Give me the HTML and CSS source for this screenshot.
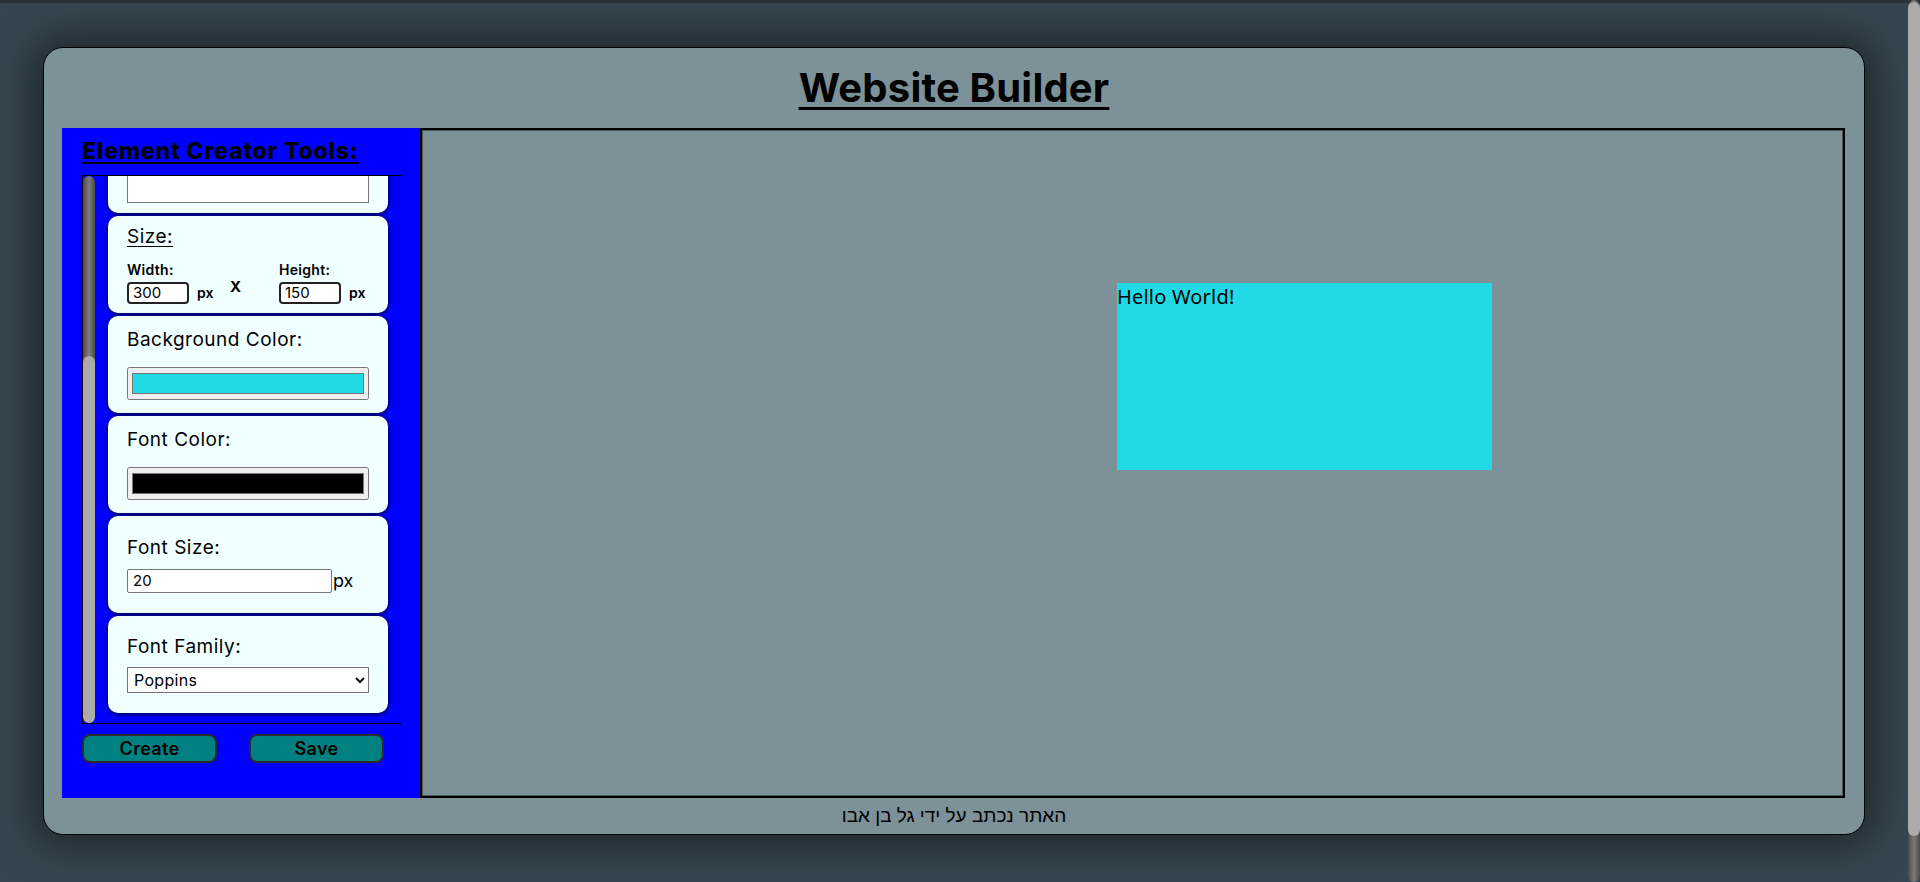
FILE: index.html
```html
<!DOCTYPE html>
<html lang="he">
<head>
<meta charset="utf-8">
<title>Website Builder</title>
<link rel="stylesheet" href="styles.css">
</head>
<body>
<div class="app">
  <header class="app-header">
    <h1 class="app-title">Website Builder</h1>
  </header>
  <main class="workspace">
    <aside class="tools">
      <h2 class="tools-title">Element Creator Tools:</h2>
      <div class="tools-scroll">
        <div class="fake-scrollbar"><div class="fake-thumb"></div></div>
        <div class="tools-viewport">
          <div class="tools-list">
            <div class="card">
              <label class="card-label">Element Type:</label>
              <select class="field-select gap-ff"><option>div</option></select>
            </div>
            <div class="card">
              <label class="card-label">Element ID:</label>
              <input class="field-text field-wide gap-fs" type="text" value="">
            </div>
            <div class="card">
              <label class="card-label">Text:</label>
              <textarea class="field-area"></textarea>
            </div>
            <div class="card">
              <span class="card-label card-label-u">Size:</span>
              <div class="size-grid">
                <span class="mini-label col-a">Width:</span>
                <span class="mini-label col-c">Height:</span>
                <div class="mini-field col-a row-2"><input class="mini-input" type="text" value="300"><span class="unit">px</span></div>
                <span class="times">X</span>
                <div class="mini-field col-c row-2"><input class="mini-input" type="text" value="150"><span class="unit">px</span></div>
              </div>
            </div>
            <div class="card">
              <label class="card-label">Background Color:</label>
              <input class="field-color" type="color" value="#22dae6">
            </div>
            <div class="card">
              <label class="card-label">Font Color:</label>
              <input class="field-color" type="color" value="#000000">
            </div>
            <div class="card">
              <label class="card-label">Font Size:</label>
              <div class="inline-field gap-fs">
                <input class="field-text field-size" type="text" value="20"><span class="unit-lg">px</span>
              </div>
            </div>
            <div class="card">
              <label class="card-label">Font Family:</label>
              <select class="field-select gap-ff"><option>Poppins</option></select>
            </div>
          </div>
        </div>
      </div>
      <div class="tools-actions">
        <button class="btn" type="button">Create</button>
        <button class="btn" type="button">Save</button>
      </div>
    </aside>
    <section class="canvas">
      <div class="element" style="left:695px;top:153px;width:375px;height:187px;background:#22dae6;color:#000000;">Hello World!</div>
    </section>
  </main>
  <footer class="app-footer">האתר נכתב על ידי גל בן אבו</footer>
</div>
<div class="page-topline"></div>
<div class="page-scrollbar"><div class="page-thumb"></div></div>
</body>
</html>
```
FILE: styles.css
```css
* {
  box-sizing: border-box;
}

html {
  background: #36454f;
}

body {
  margin: 0;
  font-family: "Inter", "Liberation Sans", sans-serif;
  color: #000;
}

.app {
  margin: 47px 55px 97px 43px;
  height: 788px;
  background: #7d9198;
  border: 1px solid #000;
  border-radius: 20px;
  box-shadow: 0 0 40px 8px rgba(0, 0, 0, 0.5);
  display: flex;
  flex-direction: column;
}

.app-header {
  height: 80px;
  flex: none;
  display: flex;
  align-items: center;
  justify-content: center;
}

.app-title {
  margin: 0;
  font-size: 40px;
  font-weight: 700;
  letter-spacing: 0.2px;
  line-height: 80px;
  text-decoration: underline;
  text-decoration-thickness: 3px;
  text-underline-offset: 5px;
}

.workspace {
  height: 670px;
  flex: none;
  display: flex;
  padding: 0 19px 0 18px;
}

.tools {
  width: 358px;
  flex: none;
  background: #0000ff;
  padding: 10px 0 0 20px;
}

.tools-title {
  margin: 0;
  font-size: 23px;
  line-height: 26px;
  font-weight: 800;
  letter-spacing: 0.8px;
  white-space: nowrap;
  text-decoration: underline;
  text-decoration-thickness: 2px;
  text-underline-offset: 3px;
}

.tools-scroll {
  margin-top: 11px;
  width: 320px;
  height: 549px;
  border: 1px solid #000;
  display: flex;
}

.fake-scrollbar {
  width: 12px;
  flex: none;
  display: flex;
  flex-direction: column;
  background: linear-gradient(to right, #4a4a4a, #7c7c7c 50%, #4a4a4a);
  border-radius: 6px;
}

.fake-thumb {
  margin-top: auto;
  height: 367px;
  background: #ababab;
  border-radius: 6px;
}

.tools-viewport {
  flex: 1;
  overflow: hidden;
  display: flex;
  flex-direction: column;
  justify-content: flex-end;
}

.tools-list {
  flex: none;
  padding: 10px 13px;
  display: flex;
  flex-direction: column;
  gap: 3px;
}

.card {
  height: 97px;
  flex: none;
  background: #f0ffff;
  border-radius: 10px;
  box-shadow: 0 1px 5px rgba(0, 0, 0, 0.9);
  padding: 0 19px;
  display: flex;
  flex-direction: column;
  justify-content: center;
}

.card-label {
  font-size: 19px;
  line-height: 22px;
  letter-spacing: 0.5px;
}

.card-label-u {
  text-decoration: underline;
  text-underline-offset: 3px;
}

.size-grid {
  margin-top: 13px;
  display: grid;
  grid-template-columns: 103px 49px auto;
}

.col-a {
  grid-column: 1;
  grid-row: 1;
}

.col-c {
  grid-column: 3;
  grid-row: 1;
}

.row-2 {
  grid-row: 2;
}

.mini-label {
  font-size: 14px;
  font-weight: 600;
  line-height: 17px;
  letter-spacing: 0.3px;
}

.mini-field {
  margin-top: 4px;
  display: flex;
  align-items: center;
  gap: 8px;
}

.mini-input {
  width: 62px;
  height: 22px;
  border: 2px solid #222;
  border-radius: 4px;
  background: #fff;
  padding: 0 4px;
  font: 15px "Inter", sans-serif;
  color: #000;
}

.unit {
  font-size: 14px;
  font-weight: 600;
}

.times {
  grid-column: 2;
  grid-row: 2;
  font-size: 15px;
  font-weight: 700;
  line-height: 17px;
}

.field-color {
  width: 100%;
  height: 33px;
  margin: 16px 0 0;
}

.field-text {
  height: 24px;
  border: 1px solid #767676;
  border-radius: 2px;
  background: #fff;
  padding: 0 5px;
  font: 15px "Inter", sans-serif;
  color: #000;
}

.field-wide {
  width: 100%;
}

.field-size {
  width: 205px;
}

.inline-field {
  display: flex;
  align-items: center;
  gap: 1px;
}

.unit-lg {
  font-size: 18px;
}

.gap-fs {
  margin-top: 10px;
}

.gap-ff {
  margin-top: 9px;
}

.field-select {
  width: 100%;
  height: 26px;
  border: 1px solid #767676;
  border-radius: 0;
  background: #fff;
  padding: 0 2px;
  font: 16px "Inter", sans-serif;
  letter-spacing: 0.3px;
  color: #000;
}

.field-area {
  display: block;
  width: 100%;
  height: 50px;
  margin-top: 5px;
  border: 1px solid #767676;
  resize: none;
  font: 15px "Inter", sans-serif;
}

.tools-actions {
  margin-top: 10px;
  display: flex;
  gap: 32px;
}

.btn {
  width: 135px;
  height: 29px;
  padding: 0;
  background: #008080;
  border: 2px solid #2b2b2b;
  border-radius: 8px;
  font: 600 18px "Inter", sans-serif;
  letter-spacing: 0.3px;
  color: #000;
}

.canvas {
  flex: 1;
  position: relative;
  border: 2px solid #000;
  box-shadow: inset 0 0 0 1px #4a565c;
}

.element {
  position: absolute;
  font-family: "Noto Sans", sans-serif;
  font-size: 20px;
  letter-spacing: 0.2px;
}

.app-footer {
  flex: 1;
  display: flex;
  align-items: center;
  justify-content: center;
  direction: rtl;
  font-family: "Liberation Sans", "DejaVu Sans", sans-serif;
  font-size: 19px;
}

.page-topline {
  position: fixed;
  top: 0;
  left: 0;
  right: 0;
  height: 3px;
  background: #2b2e33;
}

.page-scrollbar {
  position: fixed;
  top: 0;
  right: 0;
  width: 12px;
  height: 100vh;
  display: flex;
  flex-direction: column;
  background: linear-gradient(to right, #4a4a4a, #7c7c7c 50%, #4a4a4a);
  border-radius: 6px;
}

.page-thumb {
  margin-top: 2px;
  height: 834px;
  background: #ababab;
  border-radius: 6px;
}
```
